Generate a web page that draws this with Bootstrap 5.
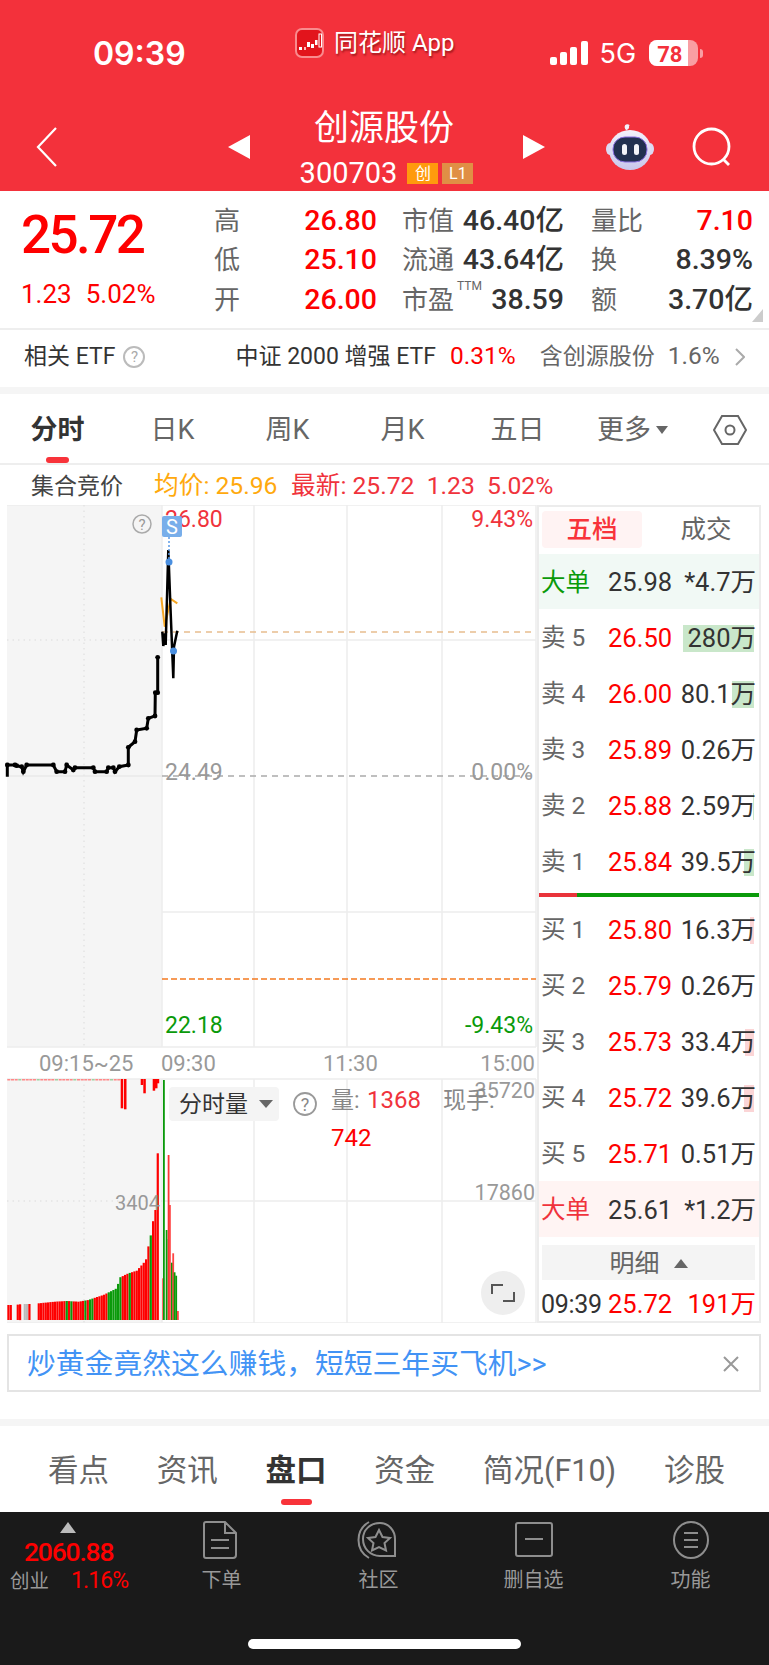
<!DOCTYPE html>
<html lang="zh-CN">
  <head>
    <meta charset="UTF-8" />
    <meta name="viewport" content="width=device-width, initial-scale=1.0" />
    <title>创源股份</title>
    <link href="https://cdn.jsdelivr.net/npm/bootstrap@5.3.0/dist/css/bootstrap.min.css" rel="stylesheet" />
    <style>
      :root {
        --brand: #f3313b;
        --up: #fe0000;
        --down: #0a9a0a;
        --ink: #333;
        --muted: #666;
        --rule: #ececec;
      }

      body {
        width: 769px;
        height: 1665px;
        overflow: hidden;
        background: #fff;
        color: var(--ink);
        font-family: Roboto, "Noto Sans CJK SC", sans-serif;
        line-height: 1;
      }

      .up { color: var(--up); }
      .tone-muted { color: var(--muted); }

      /* red header */
      .top-head { height: 191px; background: var(--brand); color: #fff; }
      .status-row { height: 100px; padding-top: 6px; }
      .clock { margin-left: 93px; width: 93px; font: 600 32px Inter, sans-serif; }
      .app-tag { margin-left: 109px; margin-top: -21px; font-size: 24px; text-shadow: 1px 2px 2px rgba(90, 0, 0, 0.55); }
      .app-tag svg { margin-right: 10px; }
      .net-tag { margin-left: 12px; font: 400 27px Inter, sans-serif; }
      .signal-wrap { margin-left: 95px; }
      .batt { margin-left: 13px; width: 49px; height: 26px; border-radius: 8px; overflow: hidden; background: #f99ea3; position: relative; }
      .batt-fill { width: 39px; height: 100%; background: #fff; }
      .batt-num { position: absolute; left: 8px; top: 2px; color: var(--brand); font: 700 22px Roboto, sans-serif; }
      .batt-tip { width: 3px; height: 9px; margin-left: 2px; background: #f99ea3; border-radius: 0 3px 3px 0; }
      .nav-row { padding-left: 36px; height: 91px; }
      .title-box { width: 273px; margin-top: 7px; }
      .stock-name { font-size: 35px; margin-bottom: 13px; margin-right: 5px; }
      .stock-code { font-size: 29px; margin-right: 10px; }
      .tag-mini { width: 31px; height: 21px; font-size: 16px; line-height: 21px; text-align: center; }
      .tag-chuang { background: #ff9a0d; }
      .tag-level { background: #e08f45; margin-left: 4px; }

      /* quote block */
      .quote-wrap { height: 137px; position: relative; }
      .quote-left { width: 214px; padding-left: 21px; }
      .last-price { font-size: 53px; font-weight: 500; letter-spacing: -2.6px; margin-top: 18px; height: 53px; }
      .last-delta { font-size: 26px; margin-top: 19px; }
      .last-delta span + span { margin-left: 14px; }
      .stat-grid { display: grid; grid-template-columns: 163px 160px 162px; column-gap: 27px; padding-top: 10px; grid-auto-rows: 39.5px; align-items: center; }
      .stat-cell { display: flex; justify-content: space-between; align-items: center; font-size: 28.5px; font-weight: 500; }
      .stat-cell em { font-style: normal; font-weight: 400; font-size: 26px; color: var(--muted); }
      .stat-cell em.mid-col { margin-left: -2px; }
      .ttm { font-size: 12px; font-weight: 400; color: var(--muted); position: absolute; margin-left: 3px; margin-top: -7px; }
      .corner-mark { position: absolute; right: 6px; bottom: 6px; width: 0; height: 0; border-left: 11px solid transparent; border-bottom: 13px solid #ccc; }

      .etf-row { height: 59px; border-top: 2px solid #eee; font-size: 23px; padding: 0 0 4px 24px; }
      .etf-num { font-size: 24.5px; }
      .hint-dot { width: 22px; height: 22px; border: 2px solid #bbb; border-radius: 50%; color: #aaa; font-size: 15px; text-align: center; line-height: 18px; }
      .gray-band { height: 7px; background: #f5f5f5; }

      /* period tabs */
      .period-row { display: grid; grid-template-columns: repeat(6, 115px) 79px; height: 71px; border-bottom: 2px solid #eee; font-size: 27px; color: var(--muted); }
      .period-item { display: flex; justify-content: center; align-items: center; position: relative; padding-top: 3px; }
      .period-item.is-on { font-weight: 700; color: var(--ink); }
      .period-item.is-on::after { content: ""; position: absolute; left: 46px; bottom: 0; width: 23px; height: 6px; border-radius: 3px; background: #f8333a; }
      .caret-mini { width: 0; height: 0; margin-left: 5px; border: 6px solid transparent; border-top: 8px solid #666; border-bottom: 0; }
      .avg-row { height: 40px; font-size: 24.7px; padding: 2px 0 0 31px; }
      .avg-row .auction { font-size: 23px; width: 123px; color: #444; }
      .avg-price { color: #ffa90d; width: 137px; }
      .avg-latest { color: #f0333c; }

      /* chart and order book */
      .board { height: 818px; }
      .chart-box { width: 537px; flex: none; }
      .chart-box svg { display: block; }
      .chart-box text { font-family: Roboto, "Noto Sans CJK SC", sans-serif; }
      .book { width: 224px; border: 2px solid var(--rule); position: relative; }
      .book-tabs { height: 47px; padding: 4px 3px 0; font-size: 25.5px; }
      .book-tab { width: 101px; height: 37px; display: flex; align-items: center; justify-content: center; border-radius: 4px; }
      .book-tab.is-on { background: #fff3f3; color: #f8333a; font-weight: 500; }
      .book-tab.is-off { margin-left: 14px; color: var(--muted); }
      .book-row { display: flex; align-items: center; height: 56px; padding: 3px 3px 0 2px; font-size: 25.5px; }
      .book-row .lbl { width: 67px; flex: none; color: var(--muted); font-size: 24.5px; }
      .book-row .prc { width: 62px; flex: none; }
      .book-row .vol { flex: 1; text-align: right; position: relative; white-space: nowrap; }
      .book-row .vol i { position: absolute; right: 2px; top: -1px; height: 27px; z-index: 0; }
      .book-row .vol b { position: relative; font-weight: 400; z-index: 1; }
      .depth-sell { background: #c9e7ca; }
      .depth-buy { background: #fbd5d6; }
      .row-green { background: #f1f9f5; height: 55px; }
      .row-green .lbl { color: var(--down); }
      .row-pink { background: #fff4f3; }
      .row-pink .lbl { color: #f0333c; }
      .split-bar { height: 4px; margin: 4px 0; background: linear-gradient(to right, #e9333a 38px, #0a9a0a 38px); }
      .detail-btn { height: 35px; margin: 8px 4px 0 3px; background: #f4f4f4; color: var(--muted); font-size: 25px; padding-top: 1px; }
      .caret-up { width: 0; height: 0; margin-left: 14px; border: 7px solid transparent; border-bottom: 9px solid #666; border-top: 0; }
      .book-row.tick-row { height: 42px; padding-top: 7px; }
      .book-row.tick-row .lbl { color: var(--ink); font-size: 25px; letter-spacing: -0.3px; }
      .tick-row .vol { color: var(--up); }

      /* promo */
      .promo { height: 58px; margin: 11px 8px 0 7px; border: 2px solid #e4e4e4; padding: 2px 20px 0 18px; color: #4293f5; font-size: 28.8px; }

      .lower-tabs { height: 86px; padding: 5px 44px 0 48px; font-size: 30.5px; color: var(--muted); }
      .lower-item { position: relative; }
      .lower-item.is-on { font-weight: 700; color: var(--ink); }
      .lower-item.is-on::after { content: ""; position: absolute; left: 15px; top: 43px; width: 31px; height: 6px; border-radius: 3px; background: #f8333a; }

      /* dark footer */
      .foot { height: 153px; background: #1a1a1a; color: #999; }
      .foot-cols { height: 127px; }
      .foot-index { width: 141px; flex: none; position: relative; }
      .foot-arrow { position: absolute; left: 60px; top: 10px; width: 0; height: 0; border: 8.5px solid transparent; border-bottom: 11px solid #bbb; border-top: 0; }
      .foot-val { position: absolute; left: 24px; top: 27px; color: var(--up); font-size: 26.5px; font-weight: 500; letter-spacing: -1.2px; }
      .foot-line { position: absolute; left: 10px; top: 59px; display: flex; align-items: center; font-size: 19.5px; }
      .foot-line span { margin-left: 22px; margin-top: -2px; color: var(--up); font-size: 23px; letter-spacing: -0.9px; }
      .foot-item { width: 157px; display: flex; flex-direction: column; align-items: center; padding-top: 9px; font-size: 20px; }
      .foot-item svg { margin-bottom: 11px; }
      .foot-item .nudge { margin-left: 4px; }
      .home-bar { width: 273px; height: 10px; border-radius: 5px; background: #fff; margin: 0 auto; }
    </style>
  </head>
  <body>
    <header class="top-head">
      <div class="status-row d-flex align-items-center">
        <div class="clock">09:39</div>
        <div class="app-tag d-flex align-items-center">
          <svg width="29" height="30" viewBox="0 0 29 30">
            <rect x="1" y="1" width="27" height="28" rx="6" fill="#e2141c" stroke="#f98b8e" stroke-width="2" />
            <rect x="4" y="19" width="3" height="3" fill="#fff" />
            <rect x="9" y="19" width="2" height="3" fill="#fbb" />
            <rect x="12" y="14" width="3" height="5" fill="#fff" />
            <rect x="16" y="16" width="3" height="4" fill="#fff" />
            <rect x="20" y="12" width="2.5" height="5" fill="#fff" />
            <rect x="24" y="6" width="2.5" height="13" fill="none" stroke="#fff" stroke-width="1" />
          </svg>
          <span>同花顺 App</span>
        </div>
        <div class="signal-wrap">
          <svg width="38" height="24" viewBox="0 0 38 24" class="d-block">
            <rect x="0" y="16" width="7" height="8" rx="2" fill="#fff" />
            <rect x="10" y="11" width="7" height="13" rx="2" fill="#fff" />
            <rect x="20" y="6" width="7" height="18" rx="2" fill="#fff" />
            <rect x="31" y="0" width="7" height="24" rx="2" fill="#fff" />
          </svg>
        </div>
        <div class="net-tag">5G</div>
        <div class="batt"><div class="batt-fill"></div><span class="batt-num">78</span></div>
        <div class="batt-tip"></div>
      </div>
      <div class="nav-row d-flex align-items-center">
        <svg width="22" height="40" viewBox="0 0 22 40" style="margin-top:2px">
          <path d="M20 1 2 20l18 19" fill="none" stroke="#fff" stroke-width="2.2" />
        </svg>
        <svg width="22" height="24" viewBox="0 0 22 24" style="margin-left:170px;margin-top:2px"><path d="M22 0v24L0 12z" fill="#fff" /></svg>
        <div class="title-box text-center">
          <div class="stock-name">创源股份</div>
          <div class="d-flex justify-content-center align-items-center">
            <span class="stock-code">300703</span>
            <span class="tag-mini tag-chuang">创</span>
            <span class="tag-mini tag-level">L1</span>
          </div>
        </div>
        <svg width="22" height="24" viewBox="0 0 22 24" style="margin-top:2px"><path d="M0 0v24l22-12z" fill="#fff" /></svg>
        <svg width="50" height="46" viewBox="0 0 50 46" style="margin-left:60px;margin-top:3px">
          <defs>
            <linearGradient id="helmet" x1="0" y1="0" x2="0" y2="1">
              <stop offset="0" stop-color="#f4f2fb" />
              <stop offset="1" stop-color="#c9c6ea" />
            </linearGradient>
          </defs>
          <path d="M22 6c-3-4 0-6 2-4" fill="none" stroke="#e9e6f6" stroke-width="2" />
          <circle cx="22" cy="3" r="2.2" fill="#f4f2fb" />
          <ellipse cx="5" cy="25" rx="4" ry="6" fill="#dcd9f2" />
          <ellipse cx="45" cy="25" rx="4" ry="6" fill="#dcd9f2" />
          <ellipse cx="25" cy="26" rx="21" ry="20" fill="url(#helmet)" />
          <rect x="8" y="13" width="34" height="25" rx="12" fill="#22304f" stroke="#8a6fe0" stroke-width="1" />
          <rect x="17" y="20" width="5" height="11" rx="2.5" fill="#f3f3f8" />
          <rect x="29" y="20" width="5" height="11" rx="2.5" fill="#f3f3f8" />
        </svg>
        <svg width="42" height="42" viewBox="0 0 42 42" style="margin-left:37px;margin-top:5px">
          <circle cx="19.500" cy="19.500" r="17.500" fill="none" stroke="#fff" stroke-width="2.800" />
          <path d="M31 32l6 6" stroke="#fff" stroke-width="2.800" />
        </svg>
      </div>
    </header>

    <section class="quote-wrap d-flex">
      <div class="quote-left">
        <div class="last-price up">25.72</div>
        <div class="last-delta up"><span>1.23</span><span>5.02%</span></div>
      </div>
      <div class="stat-grid">
        <div class="stat-cell"><em>高</em><span class="up">26.80</span></div>
        <div class="stat-cell"><em class="mid-col">市值</em><span>46.40亿</span></div>
        <div class="stat-cell"><em>量比</em><span class="up">7.10</span></div>
        <div class="stat-cell"><em>低</em><span class="up">25.10</span></div>
        <div class="stat-cell"><em class="mid-col">流通</em><span>43.64亿</span></div>
        <div class="stat-cell"><em>换</em><span>8.39%</span></div>
        <div class="stat-cell"><em>开</em><span class="up">26.00</span></div>
        <div class="stat-cell"><em class="mid-col">市盈<span class="ttm">TTM</span></em><span>38.59</span></div>
        <div class="stat-cell"><em>额</em><span>3.70亿</span></div>
      </div>
      <span class="corner-mark"></span>
    </section>

    <section class="etf-row d-flex align-items-center">
      <span>相关 ETF</span>
      <span class="hint-dot ms-2">?</span>
      <span style="margin-left:90px">中证 2000 增强 ETF</span>
      <span class="up etf-num" style="margin-left:14px">0.31%</span>
      <span class="tone-muted" style="margin-left:24px">含创源股份</span>
      <span class="tone-muted etf-num" style="margin-left:13px">1.6%</span>
      <svg width="10" height="18" viewBox="0 0 10 18" style="margin-left:15px"><path d="M1 1l8 8-8 8" fill="none" stroke="#aaa" stroke-width="2" /></svg>
    </section>
    <div class="gray-band"></div>

    <nav class="period-row">
      <div class="period-item is-on">分时</div>
      <div class="period-item">日K</div>
      <div class="period-item">周K</div>
      <div class="period-item">月K</div>
      <div class="period-item">五日</div>
      <div class="period-item">更多<span class="caret-mini"></span></div>
      <div class="period-item">
        <svg width="34" height="30" viewBox="0 0 34 30"><path d="M9 1h16l8 14-8 14H9L1 15z" fill="none" stroke="#666" stroke-width="2" /><circle cx="17" cy="15" r="4.500" fill="none" stroke="#666" stroke-width="2" /></svg>
      </div>
    </nav>

    <div class="avg-row d-flex align-items-center">
      <span class="auction">集合竞价</span>
      <span class="avg-price">均价: 25.96</span>
      <span class="avg-latest">最新: 25.72&nbsp;&nbsp;1.23&nbsp;&nbsp;5.02%</span>
    </div>

    <main class="board d-flex">
      <div class="chart-box">
        <svg id="chart" width="537" height="818" viewBox="0 505 537 818"></svg>
      </div>
      <aside class="book">
        <div class="book-tabs d-flex">
          <div class="book-tab is-on">五档</div>
          <div class="book-tab is-off">成交</div>
        </div>
        <div class="book-row row-green"><span class="lbl">大单</span><span class="prc">25.98</span><span class="vol"><b>*4.7万</b></span></div>
        <div class="book-row"><span class="lbl">卖 5</span><span class="prc up">26.50</span><span class="vol"><i class="depth-sell" style="width:71px"></i><b>280万</b></span></div>
        <div class="book-row"><span class="lbl">卖 4</span><span class="prc up">26.00</span><span class="vol"><i class="depth-sell" style="width:22px"></i><b>80.1万</b></span></div>
        <div class="book-row"><span class="lbl">卖 3</span><span class="prc up">25.89</span><span class="vol"><b>0.26万</b></span></div>
        <div class="book-row"><span class="lbl">卖 2</span><span class="prc up">25.88</span><span class="vol"><i class="depth-sell" style="width:1px"></i><b>2.59万</b></span></div>
        <div class="book-row"><span class="lbl">卖 1</span><span class="prc up">25.84</span><span class="vol"><i class="depth-sell" style="width:10px"></i><b>39.5万</b></span></div>
        <div class="split-bar"></div>
        <div class="book-row"><span class="lbl">买 1</span><span class="prc up">25.80</span><span class="vol"><i class="depth-buy" style="width:4px"></i><b>16.3万</b></span></div>
        <div class="book-row"><span class="lbl">买 2</span><span class="prc up">25.79</span><span class="vol"><b>0.26万</b></span></div>
        <div class="book-row"><span class="lbl">买 3</span><span class="prc up">25.73</span><span class="vol"><i class="depth-buy" style="width:9px"></i><b>33.4万</b></span></div>
        <div class="book-row"><span class="lbl">买 4</span><span class="prc up">25.72</span><span class="vol"><i class="depth-buy" style="width:10px"></i><b>39.6万</b></span></div>
        <div class="book-row"><span class="lbl">买 5</span><span class="prc up">25.71</span><span class="vol"><b>0.51万</b></span></div>
        <div class="book-row row-pink"><span class="lbl">大单</span><span class="prc">25.61</span><span class="vol"><b>*1.2万</b></span></div>
        <div class="detail-btn d-flex align-items-center justify-content-center">明细<span class="caret-up"></span></div>
        <div class="book-row tick-row"><span class="lbl">09:39</span><span class="prc up">25.72</span><span class="vol"><b>191万</b></span></div>
      </aside>
    </main>

    <div class="promo d-flex align-items-center justify-content-between">
      <span>炒黄金竟然这么赚钱，短短三年买飞机&gt;&gt;</span>
      <svg width="16" height="16" viewBox="0 0 16 16"><path d="M1 1l14 14M15 1 1 15" stroke="#999" stroke-width="2" /></svg>
    </div>

    <div class="gray-band" style="margin-top:27px"></div>

    <nav class="lower-tabs d-flex align-items-center justify-content-between">
      <span class="lower-item">看点</span>
      <span class="lower-item">资讯</span>
      <span class="lower-item is-on">盘口</span>
      <span class="lower-item">资金</span>
      <span class="lower-item">简况(F10)</span>
      <span class="lower-item">诊股</span>
    </nav>

    <footer class="foot">
      <div class="foot-cols d-flex">
        <div class="foot-index">
          <span class="foot-arrow"></span>
          <span class="foot-val">2060.88</span>
          <div class="foot-line">创业<span>1.16%</span></div>
        </div>
        <div class="foot-item">
          <svg width="34" height="38" viewBox="0 0 34 38"><path d="M3 1h19l11 11v22a3 3 0 0 1-3 3H3a2 2 0 0 1-2-2V3a2 2 0 0 1 2-2zM22 1v11h11M8 19h18M8 27h18" fill="none" stroke="#8e8e8e" stroke-width="2" /></svg>
          <span class="nudge">下单</span>
        </div>
        <div class="foot-item">
          <svg width="40" height="38" viewBox="0 0 40 38"><path d="M12 1C-2 9-2 29 12 37" fill="none" stroke="#8e8e8e" stroke-width="2" /><path d="M23 2c9 0 15 8 15 16v17H23C13 35 6 27 6 18S13 2 23 2z" fill="none" stroke="#8e8e8e" stroke-width="2" /><path d="M22 9l3.500 7 7.500 1-5.500 5 1.500 7.500-7-3.500-7 3.500 1.500-7.500-5.500-5 7.500-1z" fill="none" stroke="#8e8e8e" stroke-width="2" /></svg>
          <span class="nudge">社区</span>
        </div>
        <div class="foot-item">
          <svg width="38" height="38" viewBox="0 0 38 38"><rect x="1" y="2" width="36" height="33" rx="2" fill="none" stroke="#8e8e8e" stroke-width="2" /><path d="M10 18h18" stroke="#8e8e8e" stroke-width="2" /></svg>
          <span>删自选</span>
        </div>
        <div class="foot-item">
          <svg width="38" height="38" viewBox="0 0 38 38"><ellipse cx="19" cy="19" rx="17" ry="18" fill="none" stroke="#8e8e8e" stroke-width="2" /><path d="M12 12h14M12 19h14M12 26h14" stroke="#8e8e8e" stroke-width="2" /></svg>
          <span>功能</span>
        </div>
      </div>
      <div class="home-bar"></div>
    </footer>

    <script src="https://cdn.jsdelivr.net/npm/bootstrap@5.3.0/dist/js/bootstrap.bundle.min.js"></script>
    <script>
      document.addEventListener("DOMContentLoaded", () => {
        const svg = document.getElementById("chart");
        let out = "";

        const rect = (x, y, w, h, fill) => {
          out += `<rect x="${x}" y="${y}" width="${w}" height="${h}" fill="${fill}"/>`;
        };
        const line = (x1, y1, x2, y2, stroke, extra = "") => {
          out += `<line x1="${x1}" y1="${y1}" x2="${x2}" y2="${y2}" stroke="${stroke}" stroke-width="1.5" ${extra}/>`;
        };
        const label = (x, y, text, fill, anchor = "start", size = 23) => {
          out += `<text x="${x}" y="${y}" fill="${fill}" font-size="${size}" text-anchor="${anchor}">${text}</text>`;
        };

        const RULE = "#ececec";
        const RED = "#fe0000";
        const GREEN = "#0a9a0a";

        // panes and grid
        rect(7, 505, 155, 542, "#f5f5f5");
        rect(7, 1079, 155, 244, "#f5f5f5");
        [
          [7, 505, 536, 505],
          [7, 1047, 536, 1047],
          [7, 1079, 536, 1079],
          [7, 1323, 536, 1323],
          [162, 640, 536, 640],
          [162, 912, 536, 912],
          [162, 1201, 536, 1201],
          [162, 505, 162, 1047],
          [254, 505, 254, 1047],
          [347, 505, 347, 1047],
          [442, 505, 442, 1047],
          [536, 505, 536, 1047],
          [162, 1079, 162, 1323],
          [254, 1079, 254, 1323],
          [347, 1079, 347, 1323],
          [442, 1079, 442, 1323],
          [536, 1079, 536, 1323],
        ].forEach((l) => line(l[0], l[1], l[2], l[3], RULE));
        const dots = 'stroke-dasharray="1.500 4"';
        line(84, 505, 84, 1047, "#e4e4e4", dots);
        line(84, 1079, 84, 1323, "#e4e4e4", dots);
        line(7, 640, 162, 640, "#e4e4e4", dots);
        line(7, 1201, 162, 1201, "#e4e4e4", dots);
        line(7, 776, 162, 776, "#e8e8e8");

        // reference lines
        line(162, 632, 536, 632, "#e8bd8e", 'stroke-dasharray="6 5"');
        line(162, 776, 536, 776, "#aaa", 'stroke-dasharray="6 5"');
        line(162, 979, 536, 979, "#f47a20", 'stroke-dasharray="6 3"');

        // price labels
        label(165, 527, "26.80", "#f0333c");
        label(533, 527, "9.43%", "#f0333c", "end");
        label(165, 780, "24.49", "#999");
        label(533, 780, "0.00%", "#999", "end");
        label(165, 1033, "22.18", GREEN);
        label(533, 1033, "-9.43%", GREEN, "end");

        // auction price line, points read in zoom pixels (1/3 px, from y 500)
        const auction = [[22,830],[22,795],[45,795],[50,797],[65,800],[70,815],[80,795],[160,795],[170,815],[195,815],[200,795],[220,810],[225,803],[280,803],[285,815],[320,815],[325,803],[340,803],[345,815],[358,800],[385,795],[385,742],[405,725],[410,690],[440,685],[445,655],[465,648],[466,578],[473,578],[473,472]];
        const toPts = (arr) => arr.map((p) => `${(p[0] / 3).toFixed(1)},${(500 + p[1] / 3).toFixed(1)}`).join(" ");
        out += `<polyline points="${toPts(auction)}" fill="none" stroke="#000" stroke-width="3"/>`;
        auction.slice(1).forEach((p) => {
          out += `<circle cx="${p[0] / 3}" cy="${500 + p[1] / 3}" r="2.400" fill="#000"/>`;
        });
        const avgLine = [[484,292],[494,380],[505,330],[512,297],[532,310]];
        out += `<polyline points="${toPts(avgLine)}" fill="none" stroke="#f5a623" stroke-width="2"/>`;
        const live = [[487,395],[490,438],[495,400],[497,435],[505,150],[512,340],[520,535],[522,440],[532,392]];
        out += `<polyline points="${toPts(live)}" fill="none" stroke="#000" stroke-width="2.500"/>`;
        line(169, 537, 169, 562, "#5b9be8", 'stroke-dasharray="2 2"');
        out += `<circle cx="169" cy="562" r="3.500" fill="#4a8fe0"/><circle cx="173.500" cy="651" r="3.500" fill="#4a8fe0"/>`;
        out += `<rect x="162" y="516" width="20" height="21" rx="2" fill="#78aeea"/>`;
        label(172, 534, "S", "#fff", "middle", 20);
        out += `<circle cx="142" cy="524" r="9" fill="#f5f5f5" stroke="#aaa" stroke-width="1.500"/>`;
        label(142, 530, "?", "#999", "middle", 15);

        // time axis
        label(39, 1071, "09:15~25", "#999", "start", 22);
        label(161, 1071, "09:30", "#999", "start", 22);
        label(323, 1071, "11:30", "#999", "start", 22);
        label(535, 1071, "15:00", "#999", "end", 22);

        // volume bars: interpolated tops, zoom pixels
        const tops = [[22,815],[25,795],[45,795],[65,792],[90,792],[115,790],[145,787],[165,785],[200,783],[235,785],[265,780],[285,773],[310,765],[330,755],[350,745],[360,712],[385,700],[410,692],[430,670],[440,655],[447,605],[455,575],[462,520],[470,500],[473,340]];
        const topAt = (x) => {
          for (let i = 1; i < tops.length; i++) {
            if (x <= tops[i][0]) {
              const a = tops[i - 1];
              const b = tops[i];
              return a[1] + ((b[1] - a[1]) * (x - a[0])) / (b[0] - a[0]);
            }
          }
          return 340;
        };
        const inAny = (x, ranges) => ranges.some((r) => x >= r[0] && x < r[1]);
        const greens = [[196,204],[209,215],[250,258],[265,280],[320,360],[382,388],[443,450]];
        const gaps = [[31,45],[58,65],[92,100],[106,113]];
        for (let x = 22; x < 476; x += 7) {
          if (inAny(x, gaps)) continue;
          const t = topAt(x + 3);
          const fill = inAny(x, greens) ? GREEN : x >= 70 && x < 80 ? "#bbb" : RED;
          rect((x / 3).toFixed(2), (1040 + t / 3).toFixed(1), 2.200, ((840 - t) / 3).toFixed(1), fill);
        }
        // overflowed bars hanging from the top of the pane
        [[362,205],[372,208],[422,135],[430,160],[458,152],[465,145],[470,130]].forEach((b) => {
          rect((b[0] / 3).toFixed(1), 1079, 2.500, ((b[1] - 117) / 3).toFixed(1), RED);
        });
        for (let x = 22; x < 360; x += 11) rect((x / 3).toFixed(1), 1079, 3, 1.500, x % 5 === 0 ? "#9fd09f" : "#f88");
        [[487,715,"#f33"],[497,570,GREEN],[503,597,GREEN],[503,345,"#f33"],[507,495,"#f44"],[513,668,GREEN],[517,640,"#f44"],[521,697,GREEN],[526,707,GREEN],[531,813,"#f44"]].forEach((b) => {
          rect((b[0] / 3).toFixed(1), (1040 + b[1] / 3).toFixed(1), 1.800, ((840 - b[1]) / 3).toFixed(1), b[2]);
        });
        rect(163, 1080, 1.800, 240, GREEN);

        // volume pane labels
        label(160, 1210, "3404", "#999", "end", 20);
        label(535, 1098, "35720", "#999", "end", 21.500);
        label(535, 1200, "17860", "#999", "end", 21.500);
        out += `<rect x="169" y="1087" width="110" height="34" rx="4" fill="#f4f4f4"/>`;
        label(179, 1112, "分时量", "#333");
        out += `<path d="M259 1100h14l-7 8z" fill="#666"/>`;
        out += `<circle cx="305" cy="1104" r="11" fill="#fff" stroke="#999" stroke-width="1.800"/>`;
        label(305, 1111, "?", "#888", "middle", 18);
        label(331, 1108, "量:", "#888");
        label(367, 1108, "1368", "#f0333c", "start", 24);
        label(443, 1108, "现手:", "#888");
        label(331, 1146, "742", RED, "start", 24);
        out += `<circle cx="503" cy="1293" r="22" fill="#eee"/>`;
        out += `<path d="M492 1294v-9h11M514 1292v9h-11" fill="none" stroke="#555" stroke-width="2"/>`;

        svg.innerHTML = out;
      });
    </script>
  </body>
</html>
